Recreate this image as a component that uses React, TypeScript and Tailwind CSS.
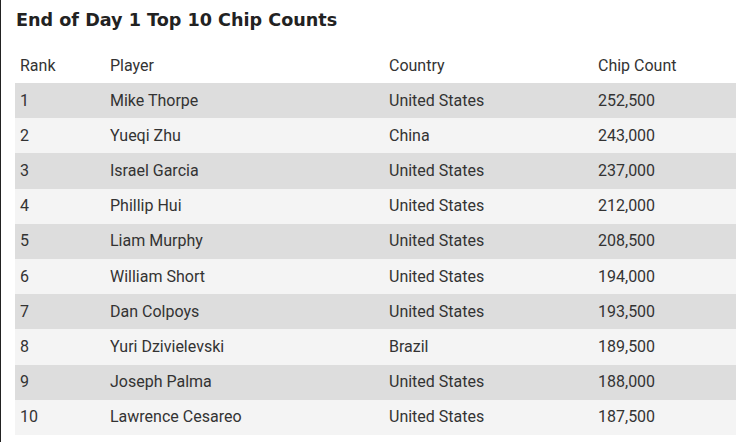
const rows = [
  ["1", "Mike Thorpe", "United States", "252,500"],
  ["2", "Yueqi Zhu", "China", "243,000"],
  ["3", "Israel Garcia", "United States", "237,000"],
  ["4", "Phillip Hui", "United States", "212,000"],
  ["5", "Liam Murphy", "United States", "208,500"],
  ["6", "William Short", "United States", "194,000"],
  ["7", "Dan Colpoys", "United States", "193,500"],
  ["8", "Yuri Dzivielevski", "Brazil", "189,500"],
  ["9", "Joseph Palma", "United States", "188,000"],
  ["10", "Lawrence Cesareo", "United States", "187,500"],
];

export default function App() {
  return (
    <div className="w-[736px] h-[442px] bg-white border-l border-[#222] overflow-hidden">
      <h3 className="pl-[15px] pt-[8px] text-[17.6px] leading-[24px] font-bold text-[#222] font-['DejaVu_Sans',sans-serif]">
        End of Day 1 Top 10 Chip Counts
      </h3>
      <table className="ml-[14px] mt-[16px] w-[722px] border-collapse text-[16px] text-[#333] font-['Roboto',sans-serif]">
        <thead>
          <tr className="h-[35px]">
            <th className="w-[90px] pl-[5px] text-left font-normal">Rank</th>
            <th className="w-[279px] pl-[5px] text-left font-normal">Player</th>
            <th className="w-[209px] pl-[5px] text-left font-normal">Country</th>
            <th className="pl-[5px] text-left font-normal">Chip Count</th>
          </tr>
        </thead>
        <tbody>
          {rows.map((r, i) => (
            <tr key={r[0]} className={`h-[35.2px] ${i % 2 === 0 ? "bg-[#dddddd]" : "bg-[#f4f4f4]"}`}>
              {r.map((c, j) => (
                <td key={j} className="pl-[5px] py-0">
                  {c}
                </td>
              ))}
            </tr>
          ))}
        </tbody>
      </table>
    </div>
  );
}
